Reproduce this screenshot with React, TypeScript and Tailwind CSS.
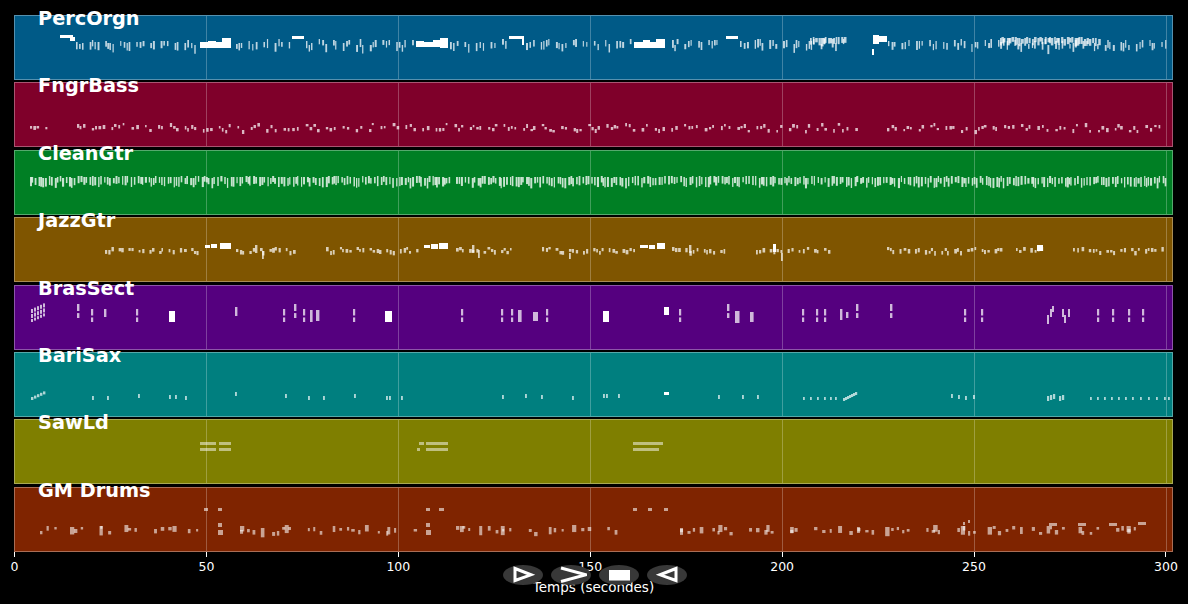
import React from "react";

type Note = [number, number, number, number];

// small seeded generator so the notes stay the same on every load
const rng = (seed: number) => () => {
  seed = (seed + 0x6d2b79f5) | 0;
  let t = Math.imul(seed ^ (seed >>> 15), 1 | seed);
  t = (t + Math.imul(t ^ (t >>> 7), 61 | t)) ^ t;
  return ((t ^ (t >>> 14)) >>> 0) / 4294967296;
};

// notes come in little clusters with a wider gap after each one
const scatter = (
  seed: number,
  ranges: [number, number][],
  step: number,
  top: number,
  spread: number,
  w: number,
  h: number,
  gap = 2.4,
): Note[] => {
  const r = rng(seed);
  const out: Note[] = [];
  for (const [from, to] of ranges) {
    let x = from;
    let left = 3;
    while (x < to) {
      out.push([x, top + Math.round(r() * spread), w * (0.75 + r() * 0.6), h * (0.7 + r() * 0.7)]);
      left -= 1;
      if (left === 0) {
        x += step * gap;
        left = 2 + Math.floor(r() * 3);
      } else {
        x += step * (0.6 + r() * 0.6);
      }
    }
  }
  return out;
};

const ticks = (xs: number[], top: number, h: number, w = 2): Note[] =>
  xs.flatMap((x) => [
    [x, top, w, h * 0.5] as Note,
    [x, top + h * 0.65, w, h * 0.35] as Note,
  ]);

const perc: Note[] = [
  ...scatter(11, [[76, 198], [236, 290], [306, 414], [450, 506], [526, 632], [672, 724], [740, 845], [888, 1168]], 3.2, 24, 6, 1.5, 6.5),
  ...scatter(12, [[810, 845], [1000, 1100]], 2.4, 22, 2, 2.2, 6, 1.4),
];
const percSolid: Note[] = [
  [60, 20, 13, 3], [70, 22, 5, 4], [200, 27, 8, 6], [208, 26, 8, 7], [216, 27, 6, 6], [222, 23, 9, 10],
  [292, 21, 12, 3], [416, 26, 8, 6], [424, 27, 9, 5], [433, 25, 7, 7], [440, 23, 8, 10],
  [509, 21, 15, 3], [522, 22, 2, 8], [634, 27, 9, 6], [643, 25, 7, 8], [650, 27, 6, 6], [656, 24, 9, 9],
  [726, 21, 12, 3], [873, 20, 6, 9], [879, 21, 8, 6], [872, 34, 2, 6],
];

const bass: Note[] = scatter(21, [[30, 46], [77, 857], [887, 1163]], 4, 41, 7, 2.1, 3, 2.2);

const clean: Note[] = scatter(31, [[30, 452], [456, 842], [846, 1167]], 2.6, 26, 2, 1.6, 7.5, 1.5);

const jazz: Note[] = [
  ...scatter(41, [[105, 200], [236, 295], [326, 420], [456, 510], [542, 636], [672, 728], [756, 835], [887, 1000], [1016, 1045], [1073, 1163]], 3.6, 30, 4, 2.1, 3.4, 2),
  [262, 34, 1.8, 8], [569, 36, 1.8, 6], [781, 36, 1.8, 8], [478, 33, 1.8, 8], [255, 28, 2.4, 8], [472, 28, 2.4, 8], [689, 28, 2.4, 8],
];
const jazzSolid: Note[] = [
  [205, 28, 5, 3], [211, 27, 6, 4], [220, 26, 11, 6], [424, 28, 6, 3], [431, 27, 7, 5], [439, 26, 9, 6],
  [640, 28, 8, 3], [649, 28, 6, 4], [657, 26, 8, 6], [1037, 28, 6, 6], [773, 27, 3, 8],
];

const brass: Note[] = [
  ...[31, 34, 37, 40, 43].flatMap((x, i): Note[] => [
    [x, 24 - i * 1.4, 2, 4], [x, 29 - i * 1.4, 2, 4], [x, 34 - i * 1.4, 2, 3],
  ]),
  ...ticks([77, 294, 727, 856, 890], 19, 14, 2.4),
  ...ticks([91, 136, 283, 353, 461, 501, 679, 802, 816, 824, 964, 981, 1097, 1112, 1128, 1142, 511, 546, 303], 24, 13, 2.2),
  [104, 24, 2.4, 8], [235, 22, 2.4, 9], [310, 25, 2.6, 12], [316, 25, 3.4, 11], [518, 25, 3.6, 12], [533, 27, 5, 9],
  [735, 26, 4.5, 12], [750, 27, 3.6, 10], [840, 24, 2.4, 11], [846, 27, 2.4, 6],
  [1047, 30, 2, 9], [1050, 24, 2, 8], [1052, 21, 2, 6], [1062, 24, 2, 8], [1064, 30, 2, 8], [1068, 24, 2, 8],
];
const brassSolid: Note[] = [[169, 26, 6, 11], [385, 26, 7, 11], [603, 26, 6, 11], [664, 22, 5, 8]];

const bari: Note[] = [
  ...[31, 34, 37, 40, 43].map((x, i): Note => [x, 45 - i * 1.4, 2.4, 3]),
  ...[92, 107, 138, 169, 175, 185, 285, 308, 323, 354, 386, 389, 401, 502, 525, 541, 572, 603, 606, 618, 718, 742, 757, 951, 958, 965, 973].map((x): Note => [x, 42 + (x % 3), 1.9, 4]),
  ...[803, 810, 817, 824, 830, 835, 1090, 1097, 1104, 1111, 1118, 1125, 1132, 1140, 1148, 1156, 1164, 1168].map((x): Note => [x, 45, 1.8, 3]),
  ...[843, 845, 847, 849, 851, 853, 855].map((x, i): Note => [x, 46 - i, 2.2, 3]),
  ...[1047, 1050, 1053, 1059, 1062].map((x, i): Note => [x, 44 - (i % 3), 2.2, 5]),
  [235, 40, 1.9, 4],
];
const bariSolid: Note[] = [[664, 40, 5, 3]];

const saw: Note[] = [
  [200, 23, 16, 3], [200, 29, 16, 3], [219, 23, 12, 3], [219, 29, 12, 3],
  [419, 23, 5, 3], [417, 29, 3, 3], [426, 23, 22, 3], [426, 29, 22, 3],
  [633, 23, 30, 3], [633, 29, 26, 3],
];

const drums: Note[] = [
  [204, 21, 4, 3], [218, 21, 4, 3], [426, 21, 4, 3], [439, 21, 5, 3], [633, 21, 4, 3], [648, 21, 4, 3], [664, 21, 4, 3],
  ...scatter(81, [[40, 200], [240, 418], [456, 634], [680, 1040], [1050, 1145]], 7, 39, 6, 2.6, 3.4, 2.8),
  ...scatter(82, [[70, 190], [240, 400], [460, 620], [680, 1000], [1020, 1145]], 30, 37, 4, 3.4, 7, 1.6),
  [218, 36, 4, 4], [218, 43, 5, 5], [426, 36, 4, 4], [426, 43, 5, 5], [963, 35, 2, 3], [968, 33, 2, 3],
  [1049, 36, 8, 3], [1078, 36, 8, 3], [1109, 36, 8, 3], [1138, 35, 8, 3],
];

const tracks = [
  { name: "PercOrgn", bg: "bg-[#005a87]", soft: perc, solid: percSolid, alpha: 0.75 },
  { name: "FngrBass", bg: "bg-[#7f002a]", soft: bass, solid: [], alpha: 0.72 },
  { name: "CleanGtr", bg: "bg-[#007f24]", soft: clean, solid: [], alpha: 0.78 },
  { name: "JazzGtr", bg: "bg-[#7f5500]", soft: jazz, solid: jazzSolid, alpha: 0.72 },
  { name: "BrasSect", bg: "bg-[#55007f]", soft: brass, solid: brassSolid, alpha: 0.72 },
  { name: "BariSax", bg: "bg-[#007f7f]", soft: bari, solid: bariSolid, alpha: 0.68 },
  { name: "SawLd", bg: "bg-[#7f7f00]", soft: saw, solid: [], alpha: 0.5 },
  { name: "GM Drums", bg: "bg-[#7f2400]", soft: drums, solid: [], alpha: 0.58 },
];

const gridX = [206.5, 398.5, 590.5, 782.5, 974.5, 1166.5];

const Track = ({ name, bg, soft, solid, alpha }: { name: string; bg: string; soft: Note[]; solid: Note[]; alpha: number }) => (
  <div className={`relative h-[65px] border border-[#ffffff55] ${bg}`}>
    <svg className="absolute inset-0 h-full w-full" viewBox="15 1 1157 63" preserveAspectRatio="none">
      {gridX.map((x) => (
        <line key={x} x1={x} x2={x} y1={0} y2={65} stroke="#fff" strokeOpacity={0.25} />
      ))}
      {soft.map(([x, y, w, h], i) => (
        <rect key={i} x={x} y={y} width={w} height={h} fill="#fff" fillOpacity={alpha} />
      ))}
      {solid.map(([x, y, w, h], i) => (
        <rect key={i} x={x} y={y} width={w} height={h} fill="#fff" />
      ))}
    </svg>
    <span className="absolute left-[23px] top-[-8px] z-10 text-[19.3px] font-bold leading-[22px] text-white">{name}</span>
  </div>
);

const Control = ({ children }: { children: React.ReactNode }) => (
  <div className="flex h-5 w-10 items-center justify-center rounded-[50%] bg-[#383838]">
    <svg width="32" height="18" viewBox="0 0 32 18">{children}</svg>
  </div>
);

export default function App() {
  return (
    <div className="relative h-[604px] w-[1188px] overflow-hidden bg-black pl-[14px] pt-[15px] font-['DejaVu_Sans',sans-serif] text-white">
      <div className="flex w-[1159px] flex-col gap-[2.4px]">
        {tracks.map((t) => (
          <Track key={t.name} {...t} />
        ))}
      </div>
      <div className="flex w-[1152px] justify-between pl-[0.5px]">
        {[0, 50, 100, 150, 200, 250, 300].map((v) => (
          <div key={v} className="flex w-0 flex-col items-center">
            <div className="h-[5px] w-px shrink-0 bg-white" />
            <span className="mt-[2.5px] text-[12.5px] leading-[16px]">{v}</span>
          </div>
        ))}
      </div>
      <div className="mt-[3.5px] w-[1159px] text-center text-[13.5px] leading-[16px]">Temps (secondes)</div>
      <div className="absolute bottom-[19px] left-[503px] flex gap-2">
        <Control>
          <path d="M8 2.5 L24 8.8 L8 14.5 Z" fill="none" stroke="#fff" strokeWidth="3" />
        </Control>
        <Control>
          <path d="M6 2 L31 8.8 L6 15.5" fill="none" stroke="#fff" strokeWidth="3" />
        </Control>
        <Control>
          <rect x="6" y="4" width="21" height="10.5" fill="#fff" />
        </Control>
        <Control>
          <path d="M25 2.5 L9 8.8 L25 14.5 Z" fill="none" stroke="#fff" strokeWidth="3" />
        </Control>
      </div>
    </div>
  );
}
